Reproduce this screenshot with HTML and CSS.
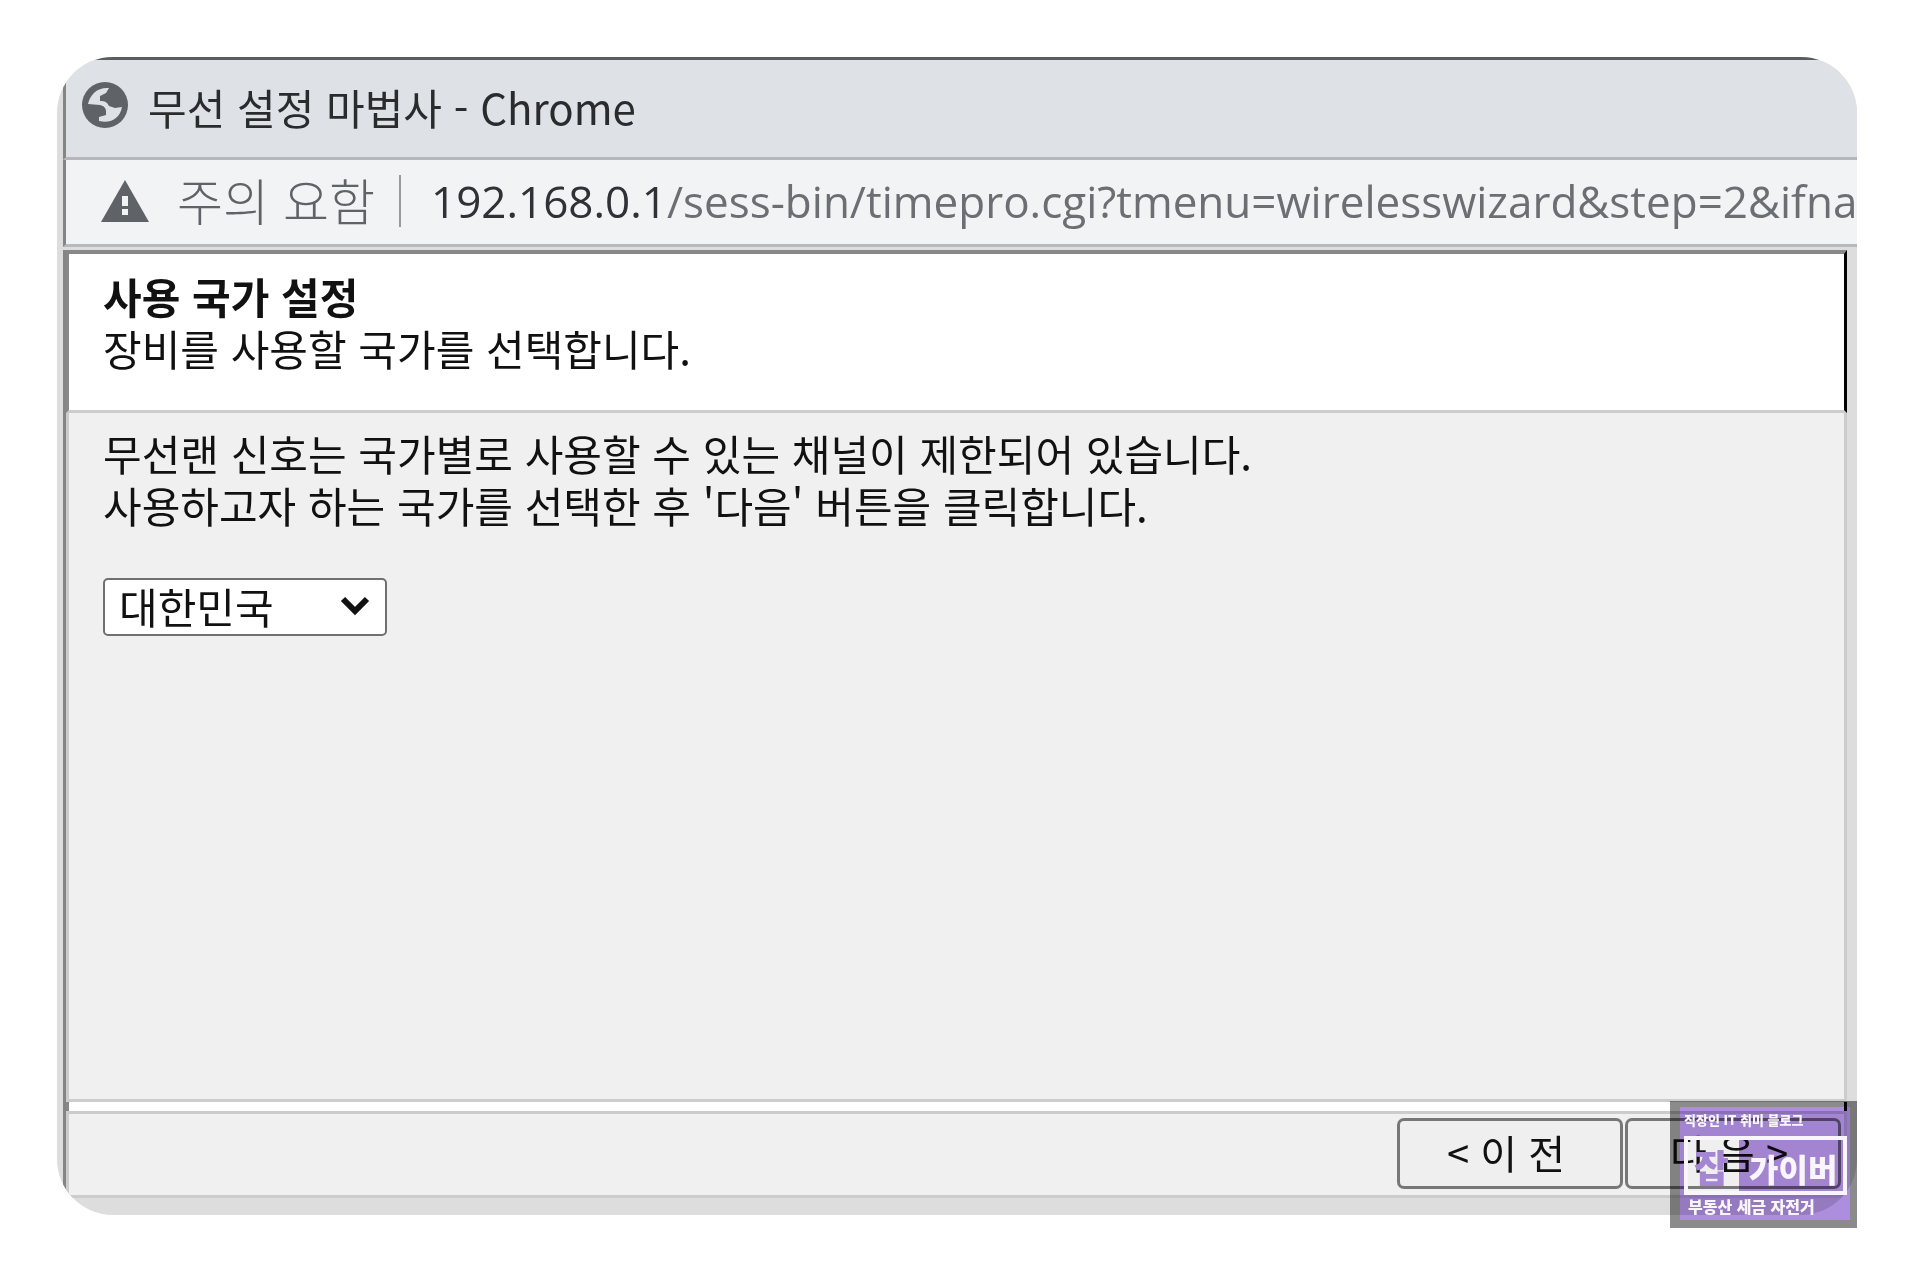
FILE: index.html
```html
<!DOCTYPE html>
<html lang="ko">
<head>
<meta charset="utf-8">
<title>무선 설정 마법사</title>
<link rel="stylesheet" href="styles.css">
</head>
<body>
<main class="window">
  <header class="titlebar">
    <svg class="globe" viewBox="0 0 46 46" aria-hidden="true">
      <circle cx="23" cy="23" r="23" fill="#5f6368"/>
      <path d="M27 6C16 5 8 12 6 22l12 1c4 1 6 3 6 7v3l-7 2v4c12 3 21-3 23-14l-7 1-6-2c-2-4-4-5-9-5v-5l6-3z" fill="#dee1e6"/>
    </svg>
    <h1 class="window-title">무선 설정 마법사 - Chrome</h1>
  </header>
  <div class="addressbar">
    <svg class="warning" viewBox="0 0 48 42" aria-hidden="true">
      <path d="M24 0 48 42H0z" fill="#5f6368"/>
      <path d="M21 16h6v10h-6zM21 29h6v6h-6z" fill="#f1f3f4"/>
    </svg>
    <span class="security">주의 요함</span>
    <span class="divider"></span>
    <span class="url"><span class="host">192.168.0.1</span>/sess-bin/timepro.cgi?tmenu=wirelesswizard&amp;step=2&amp;ifna</span>
  </div>
  <div class="viewport">
    <section class="heading">
      <h2>사용 국가 설정</h2>
      <p>장비를 사용할 국가를 선택합니다.</p>
    </section>
    <section class="content">
      <label for="country">무선랜 신호는 국가별로 사용할 수 있는 채널이 제한되어 있습니다.<br>사용하고자 하는 국가를 선택한 후 '다음' 버튼을 클릭합니다.</label>
      <div class="select-box">
        <select id="country"><option>대한민국</option></select>
        <svg class="chevron" viewBox="0 0 30 20" aria-hidden="true"><path d="M3 3l12 12L27 3" fill="none" stroke="#111" stroke-width="6"/></svg>
      </div>
    </section>
    <div class="gap"></div>
    <footer class="actions">
      <button type="button" class="prev">&lt; 이 전</button>
      <button type="button" class="next">다 음 &gt;</button>
    </footer>
  </div>
</main>
<div class="badge badge-tint">
  <div class="badge-inner">
    <div class="badge-name"><span class="badge-mark"></span></div>
  </div>
</div>
<aside class="badge">
  <div class="badge-inner">
    <p class="badge-top">직장인 IT 취미 블로그</p>
    <p class="badge-name"><span class="badge-mark">잡</span><span class="badge-rest">가이버</span></p>
    <p class="badge-bottom">부동산 세금 자전거</p>
  </div>
</aside>
</body>
</html>
```
FILE: styles.css
```css
* { box-sizing: border-box; }
html { background: #fff; }
body {
  position: relative;
  display: flex;
  min-height: 100vh;
  margin: 0;
  padding: 57px;
  background: #fff;
  color: #111;
  font-family: "Noto Sans CJK KR", sans-serif;
  font-size: 42px;
  font-weight: 400;
  line-height: 52px;
}
h1, h2, p { margin: 0; font-size: inherit; }
.window {
  flex: 1;
  min-width: 0;
  display: flex;
  flex-direction: column;
  overflow: hidden;
  padding-left: 6px;
  border-radius: 56px;
  background: #ddd;
}
.titlebar, .addressbar {
  display: flex;
  align-items: center;
  border-left: 3px solid #858585;
  white-space: nowrap;
}
.titlebar {
  height: 103px;
  padding: 0 16px 4px;
  gap: 20px;
  border-top: 3px solid #5a5c60;
  border-bottom: 3px solid #b5b7ba;
  background: #dee1e6;
}
.globe { width: 46px; height: 46px; margin-bottom: 4px; }
.window-title { color: #2a2b2d; font-weight: 400; }
.addressbar {
  height: 87px;
  padding: 0 0 2px 35px;
  border-bottom: 3px solid #b8b9ba;
  background: #f1f3f4;
  overflow: hidden;
}
.warning { width: 48px; height: 42px; flex: none; }
.security { margin-left: 28px; padding-bottom: 4px; color: #5f6368; font-size: 50px; font-weight: 300; }
.divider { width: 2px; height: 52px; margin: 0 30px 0 24px; background: #999; flex: none; }
.url { color: #6b6e72; font-family: "Open Sans", sans-serif; font-size: 44px; }
.host { color: #303136; }
.viewport {
  flex: 1;
  display: flex;
  flex-direction: column;
  margin: 3px 10px 17px 0;
  border-left: 3px solid #858585;
  border-bottom: 3px solid #ccc;
}
.heading {
  padding: 16px 34px 36px;
  border: solid #888;
  border-width: 4px 3px 3px;
  border-right-color: #000;
  border-bottom-color: #ccc;
  background: #fff;
}
.heading h2 { font-weight: 700; }
.content {
  flex: 1;
  padding: 14px 34px;
  border: solid #ccc;
  border-width: 0 3px 3px;
  background: #f0f0f0;
}
.content label { display: block; }
.select-box { position: relative; width: 284px; margin-top: 47px; }
select {
  display: block;
  width: 100%;
  height: 58px;
  padding: 0 14px 4px;
  appearance: none;
  border: 2px solid #707070;
  border-radius: 5px;
  background: #fff;
  color: #111;
  font: inherit;
}
.chevron { position: absolute; right: 17px; top: 16px; width: 30px; height: 24px; pointer-events: none; }
.gap { height: 9px; border: solid #888; border-width: 0 3px; border-right-color: #000; background: #fff; }
.actions {
  display: flex;
  justify-content: flex-end;
  gap: 2px;
  padding: 4px 3px 6px;
  border: solid #ccc;
  border-width: 3px 3px 0;
  background: #f0f0f0;
}
button {
  height: 71px;
  padding: 0 8px 4px 0;
  border: 3px solid #777;
  border-radius: 7px;
  background: #efefef;
  color: #111;
  font: inherit;
  font-size: 40px;
}
.prev { width: 226px; }
.next { width: 216px; }

/* The badge is a tint layer that darkens the window, with its lettering above */
.badge {
  position: absolute;
  right: 57px;
  bottom: 44px;
  width: 187px;
  height: 127px;
  padding: 6px 7px 8px 10px;
}
.badge-inner {
  height: 100%;
  padding: 4px 3px 0 4px;
  color: #f8f5fc;
  font-weight: 900;
  white-space: nowrap;
}
.badge-top { font-size: 13px; line-height: 17px; }
.badge-name {
  display: flex;
  height: 59px;
  margin-top: 8px;
  border: 4px solid #f8f5fc;
  line-height: 51px;
}
.badge-mark { width: 51px; padding-left: 6px; color: #a586d3; font-size: 38px; }
.badge-rest { flex: 1; padding-left: 10px; font-size: 32px; line-height: 56px; }
.badge-bottom { padding-left: 4px; font-size: 16px; line-height: 22px; }
.badge-tint { background: #8b8b8b; mix-blend-mode: multiply; }
.badge-tint .badge-inner { padding-top: 21px; background: #ad8dde; }
.badge-tint .badge-mark { background: #fff; }
```
